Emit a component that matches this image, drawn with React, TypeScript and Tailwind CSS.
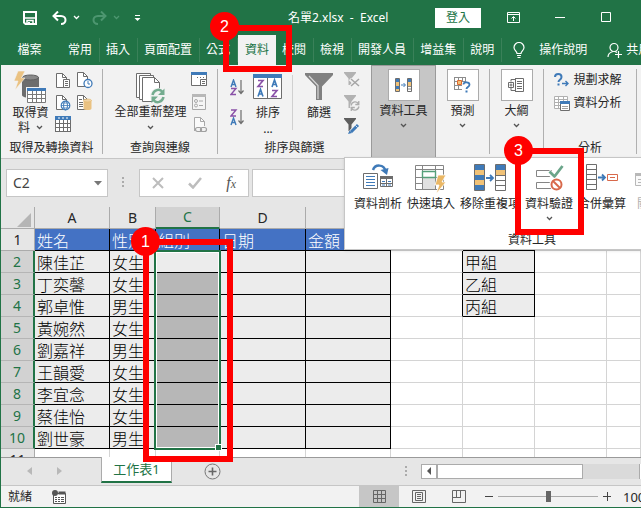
import type { ReactNode } from "react";

type IconProps = { w: number; h: number; children: ReactNode; className?: string };

function Icon({ w, h, children, className }: IconProps) {
  return (
    <svg width={w} height={h} viewBox={`0 0 ${w} ${h}`} fill="none" aria-hidden="true" className={className ?? "shrink-0"}>
      {children}
    </svg>
  );
}

function Chevron({ color = "#555" }: { color?: string }) {
  return (
    <Icon w={7} h={5}>
      <path d="M1 1l2.5 2.5L6 1" stroke={color} strokeWidth="1.3" />
    </Icon>
  );
}

const GRAY = "#6d6d6d";
const BLUE = "#3f7ab8";

/* ---------- title bar icons ---------- */

const SaveIcon = () => (
  <Icon w={14} h={14}>
    <path d="M1 1h12v12H2.500L1 11.500z" stroke="#fff" strokeWidth="2" />
    <path d="M2 7h10M4 13V9.500h6V13" stroke="#fff" strokeWidth="1.500" />
    <path d="M5 11h2v3H5z" fill="#fff" />
  </Icon>
);

const UndoIcon = () => (
  <Icon w={15} h={14}>
    <path d="M2 5h7c6 0 6 8 0 8" stroke="#fff" strokeWidth="2" />
    <path d="M6 0.500L1.500 5L6 9.500" stroke="#fff" strokeWidth="2" />
  </Icon>
);

const RedoIcon = () => (
  <Icon w={15} h={14}>
    <path d="M13 5H6c-6 0-6 8 0 8" stroke="#4d9670" strokeWidth="2" />
    <path d="M9 0.500L13.500 5L9 9.500" stroke="#4d9670" strokeWidth="2" />
  </Icon>
);

/* ---------- ribbon icons ---------- */

const GetDataIcon = () => (
  <Icon w={33} h={34}>
    <path d="M8 7v18c0 4 17 4 17 0V7z" fill={GRAY} />
    <ellipse cx="16.500" cy="7.500" rx="8" ry="2.500" fill="#8a8a8a" stroke="#606060" />
    <path d="M4 1h7L7.500 8H11L1 20l3-9H0z" fill="#eac282" stroke="#f2f2f2" strokeWidth=".6" />
    <path d="M12 17h21v17H12z" fill="#f2f2f2" />
    <path d="M13.500 18.500h18v14h-18zM13 24.500h19M13 28.500h19M18.500 20v13M22.500 20v13M27.500 20v13" stroke="#7a7a7a" fill="#fff" />
    <path d="M13 18h19v3H13z" fill={BLUE} />
  </Icon>
);

const page = "M1.500 1.500h6l4 4v10h-10z";

const DocTextIcon = () => (
  <Icon w={17} h={17}>
    <path d={page} fill="#fff" stroke={GRAY} />
    <path d="M7.500 1.500v4h4" stroke={GRAY} />
    <path d="M8.500 7.500h6v8h-6z" fill="#fff" stroke={GRAY} />
    <path d="M10 9.500h3M10 11.500h3M10 13.500h3" stroke={GRAY} />
  </Icon>
);

const DocClockIcon = () => (
  <Icon w={17} h={18}>
    <path d={page} fill="#fff" stroke={GRAY} />
    <path d="M7.500 1.500v4h4" stroke={GRAY} />
    <circle cx="12" cy="12.500" r="4" fill="#fff" stroke={BLUE} strokeWidth="1.300" />
    <path d="M12 10v3h2" stroke={BLUE} />
  </Icon>
);

const DocWebIcon = () => (
  <Icon w={17} h={17}>
    <path d={page} fill="#fff" stroke={GRAY} />
    <path d="M7.500 1.500v4h4" stroke={GRAY} />
    <circle cx="10.500" cy="11.500" r="4.300" fill="#fff" stroke={BLUE} strokeWidth="1.200" />
    <ellipse cx="10.500" cy="11.500" rx="2" ry="4.300" stroke={BLUE} />
    <path d="M6 11.500h9M7 9h7M7 14h7" stroke={BLUE} strokeWidth=".8" />
  </Icon>
);

const DocDatabaseIcon = () => (
  <Icon w={17} h={17}>
    <path d={page} fill="#fff" stroke={GRAY} />
    <path d="M7.500 1.500v4h4M3 5.500h3M3 8.500h4M3 10.500h4M3 12.500h4" stroke={GRAY} />
    <path d="M7.500 6.500v8c0 2 8 2 8 0v-8z" fill="#eac282" />
    <ellipse cx="11.500" cy="6.500" rx="4" ry="1.500" fill="#f1d3a2" stroke="#e0b36a" strokeWidth=".6" />
  </Icon>
);

const TableIcon = () => (
  <Icon w={17} h={17}>
    <path d="M.5.500h15v15H.500zM0 7.500h16M0 11.500h16M4.500 4v12M8.500 4v12M12.500 4v12" fill="#fff" stroke={GRAY} shapeRendering="crispEdges" />
    <path d="M0 0h16v4H0z" fill={BLUE} />
    <path d="M3 2h2M7 2h2M11 2h2" stroke="#fff" />
  </Icon>
);

const RefreshAllIcon = () => (
  <Icon w={30} h={31}>
    <path d="M.5.500h14v24H.500z" fill="#fff" stroke={GRAY} />
    <path d="M3.500 2.500h14v24h-14z" fill="#fff" stroke={GRAY} />
    <path d="M6.500 4.500h12l5 5v19h-17z" fill="#fff" stroke={GRAY} />
    <path d="M18.500 4.500v5h5" stroke={GRAY} />
    <circle cx="22" cy="23" r="8" fill="#f2f2f2" />
    <path d="M16.500 22c1-5 7-7 10-3M27.500 24c-1 5-7 7-10 3" stroke="#74ac8f" strokeWidth="2.500" />
    <path d="M28.500 15.500v6.500h-6.500zM15.500 30v-6.500h6.500z" fill="#74ac8f" />
  </Icon>
);

const PaneIcon = () => (
  <Icon w={17} h={16}>
    <path d="M.5.500h15v13H.500z" fill="#fff" stroke={GRAY} />
    <path d="M0 0h16v3H0z" fill={BLUE} />
    <path d="M9.500 7.500h6v6h-6z" fill="#fff" stroke={GRAY} />
    <path d="M6 5.500h1M9 5.500h1M12 5.500h1M11 9.500h3M11 11.500h3" stroke={GRAY} />
  </Icon>
);

const PropertiesIcon = () => (
  <Icon w={17} h={17}>
    <path d="M1.500.500h13v15h-13z" fill="#f5f5f5" stroke="#a8a8a8" />
    <path d="M1 0h14v3H1z" fill="#b8b8b8" />
    <circle cx="5" cy="7" r="1.500" stroke="#a8a8a8" />
    <circle cx="5" cy="11.500" r="1.500" stroke="#a8a8a8" />
    <path d="M8 7h4M8 11.500h4" stroke="#a8a8a8" />
  </Icon>
);

const LinkDocIcon = () => (
  <Icon w={17} h={17}>
    <path d="M3.500 13V.500h6l4 4V9" fill="#fafafa" stroke="#a8a8a8" />
    <path d="M9.500.500v4h4M3.500 13v1" stroke="#a8a8a8" />
    <rect x="4.500" y="10.500" width="6" height="4" rx="2" fill="#f2f2f2" stroke="#a0a0a0" strokeWidth="1.200" />
    <rect x="9.500" y="10.500" width="6" height="4" rx="2" stroke="#a0a0a0" strokeWidth="1.200" />
  </Icon>
);

const Zed = "M0 0h5L0 6h5";
const Ay = "M0 7L2.500 0L5 7M1 4.500h3";

function SortIcon({ descending = false }: { descending?: boolean }) {
  return (
    <Icon w={14} h={17}>
      <path d={Ay} transform={descending ? "translate(1 9)" : "translate(1 1)"} stroke={BLUE} strokeWidth="1.400" />
      <path d={Zed} transform={descending ? "translate(1 1)" : "translate(1 9.500)"} stroke="#8a52a8" strokeWidth="1.400" />
      <path d="M11 1v13M8.500 11.500L11 14.500L13.500 11.500" stroke={GRAY} strokeWidth="1.200" />
    </Icon>
  );
}

const SortBigIcon = () => (
  <Icon w={30} h={26}>
    <path d="M.5.500h28v24H.500zM14.500 3v22" fill="#fff" stroke={GRAY} />
    <path d="M0 0h29v4H0z" fill={BLUE} />
    <g strokeWidth="1.600">
      <path d={Zed} transform="translate(5 6.500)" stroke="#8a52a8" />
      <path d={Ay} transform="translate(5 15.500)" stroke={BLUE} />
      <path d={Ay} transform="translate(19 6)" stroke={BLUE} />
      <path d={Zed} transform="translate(19 16.500)" stroke="#8a52a8" />
    </g>
  </Icon>
);

const FilterBigIcon = () => (
  <Icon w={28} h={28}>
    <path d="M0 0h28v2L17 13.500V27h-6V13.500L0 2z" fill="#808080" />
    <path d="M4 3l9 9.500V26" stroke="#d8d8d8" strokeWidth="1.200" />
  </Icon>
);

const funnel = "M0 0h12v1L7.500 6.500V13h-3V6.500L0 1z";

const ClearFilterIcon = () => (
  <Icon w={16} h={16}>
    <path d={funnel} fill="#b2b2b2" />
    <path d="M6 7l9 8M15 7l-9 8" stroke="#f2f2f2" strokeWidth="3.500" />
    <path d="M7 7l8 7M15 7l-8 7" stroke="#a5a5a5" strokeWidth="1.500" />
  </Icon>
);

const ReapplyIcon = () => (
  <Icon w={16} h={16}>
    <path d={funnel} fill="#b2b2b2" />
    <circle cx="11" cy="11" r="5" fill="#f2f2f2" />
    <path d="M7 10.500c1-4 6-5 7.500-1.500M15 11.500c-1 4-6 5-7.500 1.500M14.800 6v3.500h-3.500M7.300 16v-3.500h3.500" stroke="#adadad" strokeWidth="1.300" />
  </Icon>
);

const AdvancedFilterIcon = () => (
  <Icon w={16} h={16}>
    <path d={funnel} fill="#5e5e5e" />
    <path d="M7 14.500L14 7" stroke="#f2f2f2" strokeWidth="5" />
    <path d="M7 14L14 7" stroke={BLUE} strokeWidth="3" />
    <path d="M4 16l1.500-3.500L8 15z" fill={BLUE} />
    <path d="M11.500 7.500l2 2" stroke="#fff" strokeWidth=".8" />
  </Icon>
);

const DataToolsIcon = () => (
  <Icon w={18} h={15}>
    <path d="M.5.500h4v13h-4zM12.500.500h4v13h-4z" fill="#fff" stroke={GRAY} />
    <path d="M1 1h3v3H1zM1 8h3v3H1zM13 1h3v3h-3z" fill={BLUE} />
    <path d="M1 4h3v4H1zM1 11h3v2H1zM13 4h3v4h-3z" fill="#f1c277" />
    <path d="M12 8.500h5M12 11h5" stroke={GRAY} strokeWidth=".8" />
    <path d="M6 7h4M8.500 5L10.500 7L8.500 9" stroke={BLUE} />
  </Icon>
);

const ForecastIcon = () => (
  <Icon w={17} h={16}>
    <path d="M.5.500h11v12H.500zM0 4.500h12M0 8.500h12M4.500 0v13M8.500 0v13" stroke="#8c8c8c" fill="#fff" shapeRendering="crispEdges" />
    <path d="M3.500 3.500h4v4h-4z" fill="#f1c277" stroke="#e0692f" />
    <path d="M8 5h8v11H8z" fill="#fff" />
    <path d="M9.500 7.500c0-3 6-3 6 .2 0 2.300-3 2.300-3 4.300" stroke={BLUE} strokeWidth="1.800" />
    <path d="M11.500 13.500h2v2h-2z" fill={BLUE} />
  </Icon>
);

const OutlineIcon = () => (
  <Icon w={17} h={15}>
    <path d="M7.500.500h8v13h-8M3 3.500V1.500h4M3 10v2.500h4" stroke={GRAY} />
    <path d="M.5 4.500h5v5h-5z" fill="#fff" stroke={GRAY} />
    <path d="M1.500 7h3M3 5.500v3" stroke={GRAY} />
    <path d="M7.500 0v14M9 3.500h5M9 5.500h5M9 8.500h5M9 10.500h5" stroke={GRAY} />
  </Icon>
);

const SolverIcon = () => (
  <Icon w={16} h={14}>
    <path d="M1 4c0-4 6.500-4 6.500 0 0 3-3 2.500-3 5" stroke={BLUE} strokeWidth="2" />
    <path d="M3.500 10.500h2v2h-2z" fill={BLUE} />
    <path d="M8 10.500h6M11.500 8L14 10.500L11.500 13" stroke={BLUE} strokeWidth="1.400" />
  </Icon>
);

const AnalysisIcon = () => (
  <Icon w={16} h={15}>
    <path d="M.5.500h13v12H.500zM0 3.500h14M0 6.500h14M0 9.500h14M4.500 0v13M9.500 0v13" stroke="#b0b0b0" fill="#fff" />
    <path d="M6.500 5.500h9v9h-9z" fill="#fff" stroke={GRAY} />
    <path d="M6 5h10v3H6z" fill={BLUE} />
    <path d="M8 10.500h6M8 12.500h6" stroke="#a0a0a0" />
  </Icon>
);

/* ---------- data-tools menu icons ---------- */

const TextToColumnsIcon = () => (
  <Icon w={31} h={27}>
    <path d="M.5 9.500h14v15H.500z" fill="#fff" stroke={GRAY} />
    <path d="M3 12.500h9M3 15.500h9M3 18.500h9M3 21.500h9" stroke={BLUE} />
    <path d="M17.500 12.500h12v10h-12zM17 19.500h13M23.500 15v8" fill="#fff" stroke={GRAY} />
    <path d="M17 12h13v3H17z" fill={GRAY} />
    <path d="M19 17.500h3M25 17.500h3M19 21h3M25 21h3" stroke={BLUE} />
    <path d="M10 6c2-6 11-6 12.500 1" stroke={BLUE} strokeWidth="2.500" />
    <path d="M17.500 6l8-2-1.500 7z" fill={BLUE} />
  </Icon>
);

const FlashFillIcon = () => (
  <Icon w={32} h={30}>
    <path d="M.5 1.500h28v24H.500zM0 5.500h29M0 13.500h29M0 19.500h29M7.500 1v25M20.500 1v25" fill="#fff" stroke="#858585" />
    <path d="M8 14h12v11H8z" fill="#e0e0e0" />
    <path d="M7.500 7.500h13v6h-13z" fill="#fff" stroke="#55a07a" strokeWidth="1.400" />
    <path d="M23 11h8l-4 7h4L21 30l3-9h-4z" fill="#eab765" stroke="#fff" strokeWidth=".8" />
  </Icon>
);

const RemoveDuplicatesIcon = () => (
  <Icon w={33} h={28}>
    <path d="M.5.500h10v26H.500zM21.500.500h10v26h-10z" fill="#fff" stroke={GRAY} />
    <path d="M1 1h9v5H1zM1 11h9v5H1zM1 21h9v5H1zM22 1h9v5h-9z" fill={BLUE} />
    <path d="M1 6h9v5H1zM1 16h9v5H1zM22 6h9v5h-9z" fill="#f1c277" />
    <path d="M22 11.500h9M22 16.500h9M22 21.500h9" stroke={GRAY} />
    <path d="M12 14h7M16 11l3 3-3 3" stroke={BLUE} strokeWidth="1.800" />
  </Icon>
);

const ValidationIcon = () => (
  <Icon w={29} h={27}>
    <path d="M1.500 6.500h15v6h-15zM1.500 18.500h15v6h-15z" fill="#fff" stroke="#858585" />
    <path d="M13.500 7.500l5 5L27 2" stroke="#fff" strokeWidth="5" />
    <path d="M14.500 7.500l5 5L27.500 2" stroke="#6ba58a" strokeWidth="2.800" />
    <circle cx="21.500" cy="20.500" r="7" fill="#fff" />
    <circle cx="21.500" cy="20.500" r="5" stroke="#d8694b" strokeWidth="2" />
    <path d="M18 17l7 7" stroke="#d8694b" strokeWidth="2" />
  </Icon>
);

const ConsolidateIcon = () => (
  <Icon w={33} h={28}>
    <path d="M.5.500h10v25H.500zM0 5.500h11M0 10.500h11M0 15.500h11M0 20.500h11" fill="#fff" stroke={GRAY} />
    <path d="M12 13.500h7M16 10.500l3 3-3 3" stroke={BLUE} strokeWidth="1.800" />
    <path d="M21.500 10.500h10v6h-10zM24 13.500h5" stroke="#d8694b" />
  </Icon>
);

const RelationsIcon = () => (
  <Icon w={40} h={27}>
    <path d="M.5 9.500h14v12H.500z" fill="#fafafa" stroke="#b8b8b8" />
    <path d="M0 9h15v3H0z" fill="#b8b8b8" />
    <path d="M3 15.500h3M3 18.500h3" stroke="#b8b8b8" />
  </Icon>
);

/* ---------- building blocks ---------- */

function IconButton({ label, children }: { label: string; children: ReactNode }) {
  return (
    <button type="button" aria-label={label} className="flex shrink-0 items-center justify-center">
      {children}
    </button>
  );
}

function Group({ width, label, children }: { width: string; label: string; children?: ReactNode }) {
  return (
    <section className={`${width} mt-1 mb-1 flex shrink-0 flex-col border-r border-[#b0b0b0]`}>
      <div className="flex h-[71px] shrink-0 justify-center">{children}</div>
      <h2 className="text-center text-xs leading-4">{label}</h2>
    </section>
  );
}

function FramedButton({ icon, label, active }: { icon: ReactNode; label: string; active?: boolean }) {
  return (
    <button
      type="button"
      className={
        active
          ? "flex w-[65px] shrink-0 flex-col items-center border-x border-t border-[#9a9a9a] bg-[#c6c6c6] pt-[3px]"
          : "my-1 flex w-[54px] shrink-0 flex-col items-center border-r border-[#b0b0b0]"
      }
    >
      <span className="flex h-8 w-8 items-center justify-center border border-[#ababab] bg-white">{icon}</span>
      <span className="mt-[2px] text-xs leading-4">{label}</span>
      <span className="mt-1">
        <Chevron />
      </span>
    </button>
  );
}

function MenuItem({ icon, label, arrow, muted }: { icon: ReactNode; label: string; arrow?: boolean; muted?: boolean }) {
  return (
    <button type="button" className={`flex shrink-0 flex-col items-center ${muted ? "text-[#b0b0b0]" : ""}`}>
      <span className="flex h-8 items-start">{icon}</span>
      <span className="text-xs leading-4 whitespace-nowrap">{label}</span>
      {arrow && (
        <span className="mt-1">
          <Chevron />
        </span>
      )}
    </button>
  );
}

/* ---------- data ---------- */

const tabs = ["常用", "插入", "頁面配置", "公式", "資料", "校閱", "檢視", "開發人員", "增益集", "說明"];

const people = [
  ["陳佳芷", "女生"],
  ["丁奕馨", "女生"],
  ["郭卓惟", "男生"],
  ["黃婉然", "女生"],
  ["劉嘉祥", "男生"],
  ["王韻愛", "女生"],
  ["李宜念", "女生"],
  ["蔡佳怡", "女生"],
  ["劉世豪", "男生"],
];

const groupNames = ["甲組", "乙組", "丙組"];

const blackCell = "border-r border-b border-black bg-[#ececec] py-0 pr-0 pl-[2px] align-bottom font-light text-black";
const headCell = "border-r border-b border-black bg-[#4472c4] py-0 pr-0 pl-[2px] text-left align-bottom font-light text-white";
const plainCell = "border-r border-b border-[#d4d4d4]";
const rowHead = "p-0 text-sm leading-5 font-normal";

function Sheet() {
  return (
    <div className="relative min-h-0 flex-1 overflow-hidden bg-white">
      <table className="w-full table-fixed border-separate border-spacing-0">
        <colgroup>
          <col className="w-[34px]" />
          <col className="w-[75px]" />
          <col className="w-[46px]" />
          <col className="w-[64px]" />
          <col className="w-[86px]" />
          <col className="w-[85px]" />
          <col className="w-[72px]" />
          <col className="w-[72px]" />
          <col className="w-[72px]" />
          <col />
        </colgroup>
        <thead>
          <tr className="h-[22px] bg-[#e6e6e6] text-sm leading-5">
            <th className="border-r border-b border-[#ababab] p-0">
              <Icon w={14} h={14} className="mt-1 ml-4">
                <path d="M14 0v14H0z" fill="#b5b5b5" />
              </Icon>
            </th>
            {["A", "B", "C", "D", "E", "F", "G", "H", "I"].map((c) => (
              <th
                key={c}
                scope="col"
                className={
                  c === "C"
                    ? "border-r border-b-2 border-r-[#ababab] border-b-[#217346] bg-[#d2d2d2] p-0 font-normal text-[#217346]"
                    : "border-r border-b border-[#ababab] p-0 font-normal"
                }
              >
                {c}
              </th>
            ))}
          </tr>
        </thead>
        <tbody className="text-base leading-[17px]">
          <tr className="h-[22px]">
            <th scope="row" className={`${rowHead} border-r border-b border-[#ababab] bg-[#e6e6e6]`}>
              1
            </th>
            {["姓名", "性別", "組別", "日期", "金額"].map((t) => (
              <td key={t} className={headCell}>
                {t}
              </td>
            ))}
            <td className={plainCell} />
            <td className="border-r border-b border-black bg-[#ed7d31]" />
            <td className={plainCell} />
            <td className={plainCell} />
          </tr>
          {people.map(([name, sex], i) => (
            <tr key={name} className="h-[22px]">
              <th
                scope="row"
                className={`${rowHead} border-r-2 border-b border-r-[#217346] border-b-[#b5b5b5] bg-[#d2d2d2] text-[#217346]`}
              >
                {i + 2}
              </th>
              <td className={blackCell}>{name}</td>
              <td className={blackCell}>{sex}</td>
              <td className={i === 0 ? "border-r border-b border-black bg-[#ececec]" : "border-r border-b border-black bg-[#b7b7b7]"} />
              <td className={blackCell} />
              <td className={blackCell} />
              <td className={i < 3 ? "border-r border-b border-r-black border-b-[#d4d4d4]" : plainCell} />
              {i < 3 ? <td className={blackCell}>{groupNames[i]}</td> : <td className={plainCell} />}
              <td className={plainCell} />
              <td className={plainCell} />
            </tr>
          ))}
          <tr className="h-[22px]">
            <th scope="row" className={`${rowHead} border-r border-[#ababab] bg-[#e6e6e6]`}>
              11
            </th>
            {["a", "b", "c", "d", "e", "f", "g", "h", "i"].map((c) => (
              <td key={c} className={plainCell} />
            ))}
          </tr>
        </tbody>
      </table>
      {/* selection outline around C2:C10 with its fill handle */}
      <div className="pointer-events-none absolute top-[43px] left-[153px] h-[200px] w-[67px] border-2 border-[#217346]">
        <div className="h-full border border-white" />
        <div className="absolute -right-[3px] -bottom-[3px] h-[7px] w-[7px] border border-white bg-[#217346]" />
      </div>
    </div>
  );
}

function Callout({ box, dot, n }: { box: string; dot: string; n: number }) {
  return (
    <>
      <div className={`pointer-events-none absolute border-[6px] border-[#ff0000] ${box}`} />
      <div
        className={`pointer-events-none absolute flex h-[29px] w-[29px] items-center justify-center rounded-full bg-[#ff0000] font-['Liberation_Sans',sans-serif] text-base text-white ${dot}`}
      >
        {n}
      </div>
    </>
  );
}

export default function App() {
  return (
    <div className="relative flex h-screen flex-col overflow-hidden border-b border-l border-[#217346] bg-[#e6e6e6] font-['Noto_Sans','Noto_Sans_CJK_TC',sans-serif] text-xs text-[#262626]">
      {/* title bar */}
      <header className="flex h-[35px] shrink-0 items-center bg-[#217346] pl-[22px] text-white">
        <div className="flex w-[265px] items-center">
          <IconButton label="儲存"><SaveIcon /></IconButton>
          <div className="ml-[15px] flex items-center gap-[6px]">
            <IconButton label="復原"><UndoIcon /></IconButton>
            <IconButton label="復原選項"><Chevron color="#fff" /></IconButton>
          </div>
          <div className="ml-[12px] flex items-center gap-[6px]">
            <IconButton label="取消復原"><RedoIcon /></IconButton>
            <IconButton label="取消復原選項"><Chevron color="#4d9670" /></IconButton>
          </div>
          <div className="ml-[14px] flex">
            <IconButton label="自訂快速存取工具列">
              <Icon w={7} h={8}>
                <path d="M1 1.500h5" stroke="#fff" />
                <path d="M0.500 4h6l-3 3z" fill="#fff" />
              </Icon>
            </IconButton>
          </div>
        </div>
        <h1 className="w-[147px] text-xs leading-4 whitespace-pre">名單2.xlsx  -  Excel</h1>
        <button type="button" className="h-5 w-[46px] bg-white leading-4 text-[#217346]">登入</button>
        <div className="ml-[26px] flex items-center gap-[35px]">
          <IconButton label="功能區顯示選項">
            <Icon w={13} h={11}>
              <path d="M.5.500h12v10H.500zM0 2.500h13M6.500 9V5M4.500 6.500l2-2 2 2" stroke="#fff" />
            </Icon>
          </IconButton>
          <IconButton label="最小化">
            <Icon w={11} h={11}><path d="M0 5.500h10" stroke="#fff" /></Icon>
          </IconButton>
          <IconButton label="最大化">
            <Icon w={11} h={11}><path d="M.5.500h9v9h-9z" stroke="#fff" /></Icon>
          </IconButton>
        </div>
      </header>

      {/* ribbon tabs */}
      <nav className="flex h-[30px] shrink-0 items-stretch bg-[#217346] text-white">
        <button type="button" className="w-[61px] shrink-0 pr-1">檔案</button>
        {tabs.map((t) =>
          t === "資料" ? (
            <button key={t} type="button" className="shrink-0 bg-[#f2f2f2] px-[7px] text-[#217346]">
              {t}
            </button>
          ) : (
            <button key={t} type="button" className="flex shrink-0 items-center">
              <span className="flex h-6 items-center border-r border-[#3a8159] pr-[7px] pl-[6px]">{t}</span>
            </button>
          ),
        )}
        <button type="button" className="ml-[11px] flex shrink-0 items-center gap-[14px]">
          <Icon w={12} h={16}>
            <path d="M4 11.500C4 9 1 8.500 1 5.500a5 5 0 0 1 10 0C11 8.500 8 9 8 11.500zM4 13.500h4M4.500 15.500h3" stroke="#fff" strokeWidth="1.200" />
          </Icon>
          <span>操作說明</span>
        </button>
        <button type="button" className="ml-5 flex shrink-0 items-center gap-1">
          <Icon w={15} h={16}>
            <circle cx="7" cy="5.500" r="4" stroke="#fff" strokeWidth="1.200" />
            <path d="M1 15c0-4 3-5 5-5.500M8 9.500l2 1M8 12.500h7M11.500 9v7" stroke="#fff" strokeWidth="1.200" />
          </Icon>
          <span>共用</span>
        </button>
      </nav>

      {/* ribbon */}
      <div className="flex h-[94px] shrink-0 border-b border-[#c6c6c6] bg-[#f2f2f2]">
        <Group width="w-[102px]" label="取得及轉換資料">
          <button type="button" className="mr-1 flex w-10 flex-col items-center pt-px">
            <GetDataIcon />
            <span className="mt-px text-xs leading-[15px]">取得資</span>
            <span className="flex items-center gap-[6px] text-xs leading-[15px]">料 <Chevron /></span>
          </button>
          <div className="grid grid-cols-2 content-start gap-x-1 gap-y-[5px] pt-[2px]">
            <IconButton label="從文字/CSV"><DocTextIcon /></IconButton>
            <IconButton label="最近使用的來源"><DocClockIcon /></IconButton>
            <IconButton label="從 Web"><DocWebIcon /></IconButton>
            <IconButton label="現有連線"><DocDatabaseIcon /></IconButton>
            <IconButton label="從表格/範圍"><TableIcon /></IconButton>
          </div>
        </Group>
        <Group width="w-[115px]" label="查詢與連線">
          <button type="button" className="flex w-[76px] flex-col items-center pt-1">
            <RefreshAllIcon />
            <span className="text-xs leading-4">全部重新整理</span>
            <span className="mt-[5px]"><Chevron /></span>
          </button>
          <div className="flex flex-col gap-[6px] pt-[3px] pl-[2px]">
            <IconButton label="查詢與連線"><PaneIcon /></IconButton>
            <IconButton label="內容"><PropertiesIcon /></IconButton>
            <IconButton label="編輯連結"><LinkDocIcon /></IconButton>
          </div>
        </Group>
        <section className="mt-1 flex w-[153px] shrink-0 flex-col">
          <div className="flex h-[71px] shrink-0 pl-3">
            <div className="flex flex-col gap-[13px] pt-[10px]">
              <IconButton label="從A到Z排序"><SortIcon /></IconButton>
              <IconButton label="從Z到A排序"><SortIcon descending /></IconButton>
            </div>
            <button type="button" className="ml-2 flex w-[32px] flex-col items-center pt-[5px]">
              <SortBigIcon />
              <span className="mt-[5px] text-xs leading-4">排序</span>
              <span className="text-xs leading-4">...</span>
            </button>
            <div className="mt-[6px] ml-2 h-[55px] border-l border-[#d0d0d0]" />
            <button type="button" className="ml-[11px] flex w-[30px] flex-col items-center pt-1">
              <FilterBigIcon />
              <span className="mt-1 text-xs leading-4">篩選</span>
            </button>
            <div className="ml-[10px] flex flex-col gap-[7px] pt-[3px]">
              <IconButton label="清除"><ClearFilterIcon /></IconButton>
              <IconButton label="重新套用"><ReapplyIcon /></IconButton>
              <IconButton label="進階"><AdvancedFilterIcon /></IconButton>
            </div>
          </div>
          <h2 className="text-center text-xs leading-4">排序與篩選</h2>
        </section>
        <FramedButton icon={<DataToolsIcon />} label="資料工具" active />
        <FramedButton icon={<ForecastIcon />} label="預測" />
        <FramedButton icon={<OutlineIcon />} label="大綱" />
        <Group width="w-[93px]" label="分析">
          <div className="mr-1 flex flex-col gap-[7px] pt-[3px]">
            <button type="button" className="flex items-center gap-[3px] text-xs leading-4"><SolverIcon />規劃求解</button>
            <button type="button" className="flex items-center gap-[3px] text-xs leading-4"><AnalysisIcon />資料分析</button>
          </div>
        </Group>
      </div>

      {/* formula bar */}
      <div className="flex h-12 shrink-0 items-center pr-2 pl-[5px]">
        <div className="flex h-7 w-[102px] shrink-0 items-center border border-[#c6c6c6] bg-white pr-[5px]">
          <input aria-label="名稱方塊" defaultValue="C2" className="w-0 flex-1 bg-transparent pl-[6px] text-sm text-[#444] outline-none" />
          <IconButton label="名稱清單">
            <Icon w={8} h={5}><path d="M0 0h8L4 4.500z" fill="#777" /></Icon>
          </IconButton>
        </div>
        <Icon w={3} h={12} className="mx-[14px] shrink-0">
          <path d="M0 0h2v2H0zM0 4h2v2H0zM0 8h2v2H0z" fill="#ababab" />
        </Icon>
        <div className="flex h-7 w-[110px] shrink-0 items-center justify-between border border-[#c6c6c6] bg-white pr-3 pl-3">
          <IconButton label="取消">
            <Icon w={12} h={12}><path d="M1 1l10 10M11 1L1 11" stroke="#bdbdbd" strokeWidth="2" /></Icon>
          </IconButton>
          <IconButton label="輸入">
            <Icon w={14} h={12}><path d="M1 6.500l4 4L13 1" stroke="#bdbdbd" strokeWidth="2.500" /></Icon>
          </IconButton>
          <button type="button" aria-label="插入函數" className="font-['Liberation_Serif',serif] text-base leading-4 text-[#555] italic">
            f<span className="text-xs">x</span>
          </button>
        </div>
        <input aria-label="資料編輯列" className="ml-[3px] h-7 min-w-0 flex-1 border border-[#c6c6c6] bg-white outline-none" />
      </div>

      <Sheet />

      {/* sheet tabs and horizontal scroll */}
      <div className="flex h-7 shrink-0 items-start border-t border-[#9a9a9a]">
        <div className="flex h-[26px] w-[100px] shrink-0 items-center gap-6 pl-[26px]">
          <IconButton label="上一張工作表">
            <Icon w={6} h={8}><path d="M5 0v8L0 4z" fill="#b8b8b8" /></Icon>
          </IconButton>
          <IconButton label="下一張工作表">
            <Icon w={6} h={8}><path d="M0 0v8l5-4z" fill="#b8b8b8" /></Icon>
          </IconButton>
        </div>
        <button type="button" className="-mt-px h-[26px] w-[71px] shrink-0 border-x border-b-2 border-x-[#ababab] border-b-[#217346] bg-white text-[13px] leading-4 text-[#217346]">
          工作表1
        </button>
        <div className="ml-8 flex h-[26px] items-center">
          <IconButton label="新工作表">
            <Icon w={17} h={17}>
              <circle cx="8.500" cy="8.500" r="7.500" stroke="#777" />
              <path d="M4.500 8.500h8M8.500 4.500v8" stroke="#666" strokeWidth="1.600" />
            </Icon>
          </IconButton>
        </div>
        <div className="ml-auto flex h-[26px] w-[236px] shrink-0 items-center">
          <Icon w={2} h={10}>
            <path d="M0 0h2v2H0zM0 4h2v2H0zM0 8h2v2H0z" fill="#ababab" />
          </Icon>
          <div className="ml-[14px] flex h-[15px] flex-1 bg-[#dadada]">
            <button type="button" aria-label="向左捲動" className="flex w-4 items-center justify-center border border-[#ababab] bg-white">
              <Icon w={5} h={8}><path d="M4 0v8L0 4z" fill="#555" /></Icon>
            </button>
            <div className="w-[146px] border border-[#ababab] bg-white" />
            <div className="ml-auto w-[2px] border-l border-[#ababab] bg-white" />
          </div>
        </div>
      </div>

      {/* status bar */}
      <footer className="flex h-[22px] shrink-0 items-center border-t border-[#c6c6c6] bg-[#f2f2f2]">
        <span className="ml-[7px] leading-4">就緒</span>
        <span className="ml-5">
          <Icon w={14} h={14}>
            <path d="M1.500 3.500h12v10h-12z" fill="#fff" stroke="#555" />
            <path d="M6.500 1.500h7v3h-7z" fill="#555" />
            <path d="M3 7.500h2M6 7.500h2M9 7.500h3M3 9.500h2M6 9.500h2M9 9.500h3M3 11.500h2M6 11.500h2M9 11.500h3" stroke="#555" />
            <circle cx="3" cy="3" r="3" fill="#555" />
          </Icon>
        </span>
        <div className="ml-auto flex h-full items-center">
          <button type="button" aria-label="標準模式" className="flex h-full w-10 items-center justify-center bg-[#c6c6c6]">
            <Icon w={13} h={13}><path d="M.5.500h12v12H.500zM0 4.500h13M0 8.500h13M4.500 0v13M8.500 0v13" stroke="#666" /></Icon>
          </button>
          <button type="button" aria-label="整頁模式" className="flex h-full w-10 items-center justify-center">
            <Icon w={14} h={13}><path d="M.5.500h13v12H.500zM3.500 2.500h7v8h-7zM5 4.500h4M5 6.500h4M5 8.500h4" stroke="#666" /></Icon>
          </button>
          <button type="button" aria-label="分頁預覽" className="flex h-full w-10 items-center justify-center">
            <Icon w={14} h={13}><path d="M.5.500h13v12H.500zM0 7.500h9M4.500 0v7M8.500 0v8" stroke="#666" /></Icon>
          </button>
          <div className="ml-[6px] flex items-center gap-[5px]">
            <IconButton label="縮小">
              <Icon w={8} h={9}><path d="M0 4.500h8" stroke="#444" /></Icon>
            </IconButton>
            <input
              type="range"
              aria-label="縮放"
              defaultValue={50}
              className="h-[11px] w-[100px] appearance-none bg-[linear-gradient(#ababab,#ababab)] bg-[length:100%_1px] bg-[position:0_5px] bg-no-repeat [&::-webkit-slider-thumb]:h-[11px] [&::-webkit-slider-thumb]:w-[5px] [&::-webkit-slider-thumb]:appearance-none [&::-webkit-slider-thumb]:bg-[#666]"
            />
            <IconButton label="放大">
              <Icon w={9} h={9}><path d="M0 4.500h8M4.500 0v9" stroke="#444" /></Icon>
            </IconButton>
          </div>
          <span className="ml-[11px] w-[18px] overflow-hidden text-[13px] leading-4">100%</span>
        </div>
      </footer>

      {/* expanded data tools menu */}
      <div className="absolute top-[157px] left-[343px] flex h-[93px] w-[376px] flex-col border border-[#c6c6c6] bg-white shadow-sm">
        <div className="flex h-[74px] gap-[5px] pt-[6px] pl-[9px]">
          <MenuItem icon={<TextToColumnsIcon />} label="資料剖析" />
          <MenuItem icon={<FlashFillIcon />} label="快速填入" />
          <MenuItem icon={<RemoveDuplicatesIcon />} label="移除重複項" />
          <MenuItem icon={<ValidationIcon />} label="資料驗證" arrow />
          <MenuItem icon={<ConsolidateIcon />} label="合併彙算" />
          <div className="pl-1">
            <MenuItem icon={<RelationsIcon />} label="關聯圖" muted />
          </div>
        </div>
        <h2 className="text-center text-xs leading-4">資料工具</h2>
      </div>

      {/* numbered step markers */}
      <Callout n={1} box="top-[239px] left-[142px] h-[223px] w-[90px]" dot="top-[227px] left-[130px]" />
      <Callout n={2} box="top-[25px] left-[222px] h-[47px] w-[69px]" dot="top-[12px] left-[209px]" />
      <Callout n={3} box="top-[148px] left-[514px] h-[87px] w-[69px]" dot="top-[136px] left-[503px]" />
    </div>
  );
}
